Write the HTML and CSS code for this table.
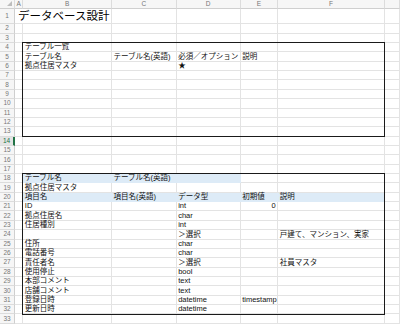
FILE: index.html
```html
<!DOCTYPE html>
<html lang="ja">
<head>
<meta charset="utf-8">
<title>データベース設計</title>
<link rel="stylesheet" href="styles.css">
</head>
<body>
<div class="sheet">
  <div class="h corner"></div><div class="h">A</div><div class="h">B</div><div class="h">C</div><div class="h">D</div><div class="h">E</div><div class="h">F</div><div class="h"></div>

  <div class="r">1</div><div class="c title">データベース設計</div><div class="c"></div><div class="c"></div><div class="c"></div><div class="c"></div><div class="c"></div>
  <div class="r">2</div><div class="c"></div><div class="c"></div><div class="c"></div><div class="c"></div><div class="c"></div><div class="c"></div><div class="c"></div>
  <div class="r">3</div><div class="c"></div><div class="c"></div><div class="c"></div><div class="c"></div><div class="c"></div><div class="c"></div><div class="c"></div>
  <div class="r">4</div><div class="c"></div><div class="c">テーブル一覧</div><div class="c"></div><div class="c"></div><div class="c"></div><div class="c"></div><div class="c"></div>
  <div class="r">5</div><div class="c"></div><div class="c">テーブル名</div><div class="c">テーブル名(英語)</div><div class="c">必須／オプション</div><div class="c">説明</div><div class="c"></div><div class="c"></div>
  <div class="r">6</div><div class="c"></div><div class="c">拠点住居マスタ</div><div class="c"></div><div class="c">★</div><div class="c"></div><div class="c"></div><div class="c"></div>
  <div class="r">7</div><div class="c"></div><div class="c"></div><div class="c"></div><div class="c"></div><div class="c"></div><div class="c"></div><div class="c"></div>
  <div class="r">8</div><div class="c"></div><div class="c"></div><div class="c"></div><div class="c"></div><div class="c"></div><div class="c"></div><div class="c"></div>
  <div class="r">9</div><div class="c"></div><div class="c"></div><div class="c"></div><div class="c"></div><div class="c"></div><div class="c"></div><div class="c"></div>
  <div class="r">10</div><div class="c"></div><div class="c"></div><div class="c"></div><div class="c"></div><div class="c"></div><div class="c"></div><div class="c"></div>
  <div class="r">11</div><div class="c"></div><div class="c"></div><div class="c"></div><div class="c"></div><div class="c"></div><div class="c"></div><div class="c"></div>
  <div class="r">12</div><div class="c"></div><div class="c"></div><div class="c"></div><div class="c"></div><div class="c"></div><div class="c"></div><div class="c"></div>
  <div class="r">13</div><div class="c"></div><div class="c"></div><div class="c"></div><div class="c"></div><div class="c"></div><div class="c"></div><div class="c"></div>
  <div class="r sel-row">14</div><div class="c"></div><div class="c"></div><div class="c"></div><div class="c"></div><div class="c"></div><div class="c"></div><div class="c"></div>
  <div class="r">15</div><div class="c"></div><div class="c"></div><div class="c"></div><div class="c"></div><div class="c"></div><div class="c"></div><div class="c"></div>
  <div class="r">16</div><div class="c"></div><div class="c"></div><div class="c"></div><div class="c"></div><div class="c"></div><div class="c"></div><div class="c"></div>
  <div class="r">17</div><div class="c"></div><div class="c"></div><div class="c"></div><div class="c"></div><div class="c"></div><div class="c"></div><div class="c"></div>
  <div class="r">18</div><div class="c"></div><div class="c fill">テーブル名</div><div class="c fill">テーブル名(英語)</div><div class="c fill"></div><div class="c"></div><div class="c"></div><div class="c"></div>
  <div class="r">19</div><div class="c"></div><div class="c">拠点住居マスタ</div><div class="c"></div><div class="c"></div><div class="c"></div><div class="c"></div><div class="c"></div>
  <div class="r">20</div><div class="c"></div><div class="c fill">項目名</div><div class="c fill">項目名(英語)</div><div class="c fill">データ型</div><div class="c fill">初期値</div><div class="c fill">説明</div><div class="c"></div>
  <div class="r">21</div><div class="c"></div><div class="c">ID</div><div class="c"></div><div class="c">int</div><div class="c num">0</div><div class="c"></div><div class="c"></div>
  <div class="r">22</div><div class="c"></div><div class="c">拠点住居名</div><div class="c"></div><div class="c">char</div><div class="c"></div><div class="c"></div><div class="c"></div>
  <div class="r">23</div><div class="c"></div><div class="c">住居種別</div><div class="c"></div><div class="c">int</div><div class="c"></div><div class="c"></div><div class="c"></div>
  <div class="r">24</div><div class="c"></div><div class="c"></div><div class="c"></div><div class="c">＞選択</div><div class="c"></div><div class="c">戸建て、マンション、実家</div><div class="c"></div>
  <div class="r">25</div><div class="c"></div><div class="c">住所</div><div class="c"></div><div class="c">char</div><div class="c"></div><div class="c"></div><div class="c"></div>
  <div class="r">26</div><div class="c"></div><div class="c">電話番号</div><div class="c"></div><div class="c">char</div><div class="c"></div><div class="c"></div><div class="c"></div>
  <div class="r">27</div><div class="c"></div><div class="c">責任者名</div><div class="c"></div><div class="c">＞選択</div><div class="c"></div><div class="c">社員マスタ</div><div class="c"></div>
  <div class="r">28</div><div class="c"></div><div class="c">使用停止</div><div class="c"></div><div class="c">bool</div><div class="c"></div><div class="c"></div><div class="c"></div>
  <div class="r">29</div><div class="c"></div><div class="c">本部コメント</div><div class="c"></div><div class="c">text</div><div class="c"></div><div class="c"></div><div class="c"></div>
  <div class="r">30</div><div class="c"></div><div class="c">店舗コメント</div><div class="c"></div><div class="c">text</div><div class="c"></div><div class="c"></div><div class="c"></div>
  <div class="r">31</div><div class="c"></div><div class="c">登録日時</div><div class="c"></div><div class="c">datetime</div><div class="c">timestamp</div><div class="c"></div><div class="c"></div>
  <div class="r">32</div><div class="c"></div><div class="c">更新日時</div><div class="c"></div><div class="c">datetime</div><div class="c"></div><div class="c"></div><div class="c"></div>
  <div class="r">33</div><div class="c"></div><div class="c"></div><div class="c"></div><div class="c"></div><div class="c"></div><div class="c"></div><div class="c"></div>

  <div class="box box-list"></div>
  <div class="box box-detail"></div>
</div>
</body>
</html>
```

FILE: styles.css
```css
html, body {
  margin: 0;
  padding: 0;
  background: #ffffff;
}

body {
  font-family: "Liberation Sans", "Noto Sans CJK JP", sans-serif;
  color: #111111;
}

.sheet {
  position: relative;
  display: grid;
  grid-template-columns: 15px 8.3px 88.7px 64.7px 64px 37.6px 106.5px 1fr;
  grid-template-rows: 9px 15.3px repeat(32, 9.37px);
  width: 400px;
  height: 324px;
  overflow: hidden;
}

.h {
  box-sizing: border-box;
  background: #f6f6f6;
  color: #777777;
  font-family: "Liberation Sans", sans-serif;
  font-size: 6.5px;
  line-height: 8px;
  text-align: center;
  border-right: 1px solid #dcdcdc;
  border-bottom: 1px solid #cfcfcf;
}

.corner {
  position: relative;
}

.corner::after {
  content: "";
  position: absolute;
  right: 2px;
  bottom: 2px;
  width: 0;
  height: 0;
  border-left: 5px solid transparent;
  border-bottom: 5px solid #bdbdbd;
}

.r {
  box-sizing: border-box;
  background: #f6f6f6;
  color: #777777;
  font-family: "Liberation Sans", sans-serif;
  font-size: 6.5px;
  line-height: 8px;
  display: flex;
  align-items: center;
  justify-content: center;
  border-right: 1px solid #cfcfcf;
  border-bottom: 1px solid #dcdcdc;
}

.sel-row {
  background: #e4e4e4;
  color: #217346;
  border-right: 2px solid #217346;
}

.c {
  box-sizing: border-box;
  min-width: 0;
  display: flex;
  align-items: flex-end;
  padding-left: 1.5px;
  font-family: "Liberation Sans", "Noto Sans CJK JP", sans-serif;
  font-size: 7.5px;
  line-height: 8px;
  white-space: nowrap;
  overflow: visible;
  border-right: 1px solid #e3e3e3;
  border-bottom: 1px solid #e3e3e3;
}

.title {
  grid-column: span 2;
  align-items: center;
  padding-left: 3px;
  font-size: 11.5px;
  line-height: 14px;
  color: #000000;
}

.fill {
  background: #ddebf7;
  border-color: #ddebf7;
}

.num {
  justify-content: flex-end;
  padding-right: 1.5px;
}

.box {
  position: absolute;
  top: -1px;
  left: -1px;
  right: -0.5px;
  bottom: -0.5px;
  border: 1.5px solid #1a1a1a;
  pointer-events: none;
  grid-column: 3 / 8;
}

.box-list {
  grid-row: 5 / 15;
}

.box-detail {
  grid-row: 19 / 34;
}
```
